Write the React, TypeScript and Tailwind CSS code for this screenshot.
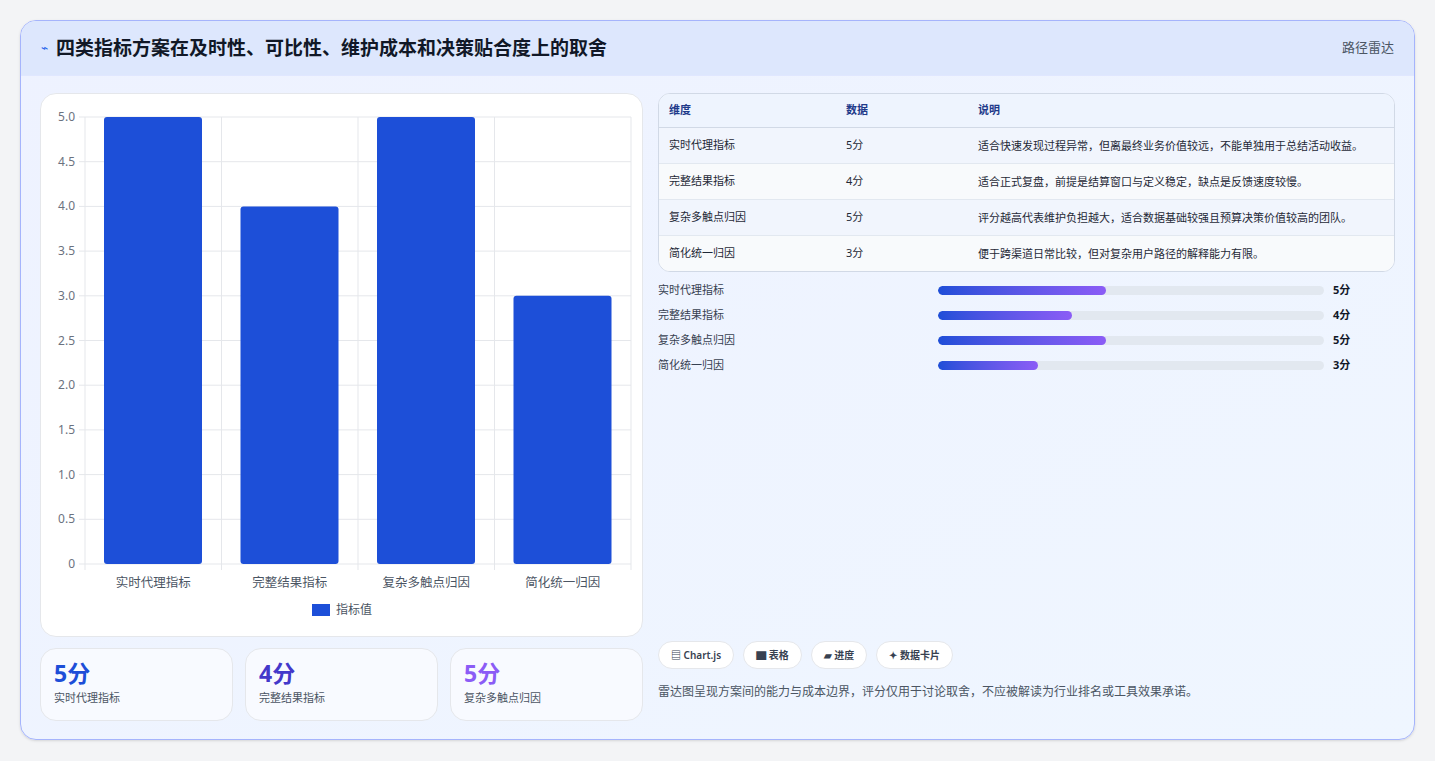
const rows = [
  { name: "实时代理指标", v: 5, pct: 43.5, note: "适合快速发现过程异常，但离最终业务价值较远，不能单独用于总结活动收益。" },
  { name: "完整结果指标", v: 4, pct: 34.7, note: "适合正式复盘，前提是结算窗口与定义稳定，缺点是反馈速度较慢。" },
  { name: "复杂多触点归因", v: 5, pct: 43.5, note: "评分越高代表维护负担越大，适合数据基础较强且预算决策价值较高的团队。" },
  { name: "简化统一归因", v: 3, pct: 26, note: "便于跨渠道日常比较，但对复杂用户路径的解释能力有限。" },
];

function BarChart() {
  // plot: x 44..590, y 22..469 inside a 600-wide svg
  const x0 = 44, x1 = 590, y0 = 22, y1 = 469;
  const h = y1 - y0;
  const colW = (x1 - x0) / 4;
  const ticks = [5, 4.5, 4, 3.5, 3, 2.5, 2, 1.5, 1, 0.5, 0];
  return (
    <svg width="600" height="530" className="block">
      {ticks.map((t) => {
        const y = y1 - (t / 5) * h;
        return (
          <g key={t}>
            <line x1={x0 - 6} x2={x1} y1={y} y2={y} stroke="#e5e7eb" />
            <text x={x0 - 10} y={y + 4} textAnchor="end" fontSize="12" fill="#6b7280">
              {t === 0 ? "0" : t.toFixed(1)}
            </text>
          </g>
        );
      })}
      {[0, 1, 2, 3, 4].map((i) => (
        <line key={i} x1={x0 + i * colW} x2={x0 + i * colW} y1={y0} y2={y1 + 6} stroke="#e5e7eb" />
      ))}
      {rows.map((r, i) => {
        const bh = (r.v / 5) * h;
        return (
          <g key={r.name}>
            <rect x={x0 + i * colW + 19} y={y1 - bh} width={98} height={bh} rx={3} fill="#1d4fd8" />
            <text x={x0 + i * colW + colW / 2} y={y1 + 23} textAnchor="middle" fontSize="12.5" fill="#4b5563">
              {r.name}
            </text>
          </g>
        );
      })}
      <rect x={271} y={509} width={18} height={12} fill="#1d4fd8" />
      <text x={295} y={519} fontSize="12" fill="#4b5563">指标值</text>
    </svg>
  );
}

export default function App() {
  const valColors = ["text-[#1d4ed8]", "text-[#4338ca]", "text-[#8b5cf6]"];
  return (
    <div className="w-[1435px] h-[761px] bg-[#f3f4f6] pt-5 px-5" style={{ fontFamily: '"Noto Sans", "Noto Sans CJK SC", sans-serif' }}>
      <div className="h-[720px] rounded-2xl border border-[#a5b4fc] bg-gradient-to-br from-[#eef2ff] to-[#eff6ff] overflow-hidden shadow-sm">
        <div className="h-[55px] flex items-center justify-between px-5 bg-[#dde7fd] border-b border-[#e0e7ff]">
          <div className="flex items-center gap-2">
            <span className="text-[#2563eb] text-xs">⌁</span>
            <h1 className="text-[19px] font-bold text-[#111827]">四类指标方案在及时性、可比性、维护成本和决策贴合度上的取舍</h1>
          </div>
          <span className="text-[13px] text-[#4b5563]">路径雷达</span>
        </div>
        <div className="flex gap-[15px] px-[19px] pt-[17px]">
          <div className="w-[603px] flex flex-col gap-[11px]">
            <div className="h-[544px] bg-white rounded-2xl border border-[#e5e7eb] pt-[1px]">
              <BarChart />
            </div>
            <div className="grid grid-cols-3 gap-3">
              {rows.slice(0, 3).map((r, i) => (
                <div key={r.name} className="h-[73px] rounded-2xl border border-[#e5e7eb] bg-[#f8faff] px-[13px] pt-[10px]">
                  <div className={`text-[23px] font-bold leading-7 ${valColors[i]}`}>{r.v}分</div>
                  <div className="text-[11px] text-[#4b5563] mt-[3px]">{r.name}</div>
                </div>
              ))}
            </div>
          </div>
          <div className="flex-1 flex flex-col">
            <div className="rounded-xl border border-[#d1d9e6] overflow-hidden bg-white">
              <table className="w-full text-[11px] text-[#1f2937]">
                <thead className="bg-[#eef4fe] text-[#1e3a8a]">
                  <tr className="border-b border-[#d1d9e6]">
                    <th className="text-left font-semibold px-[10px] h-[33px] w-[177px]">维度</th>
                    <th className="text-left font-semibold px-[10px] w-[132px]">数据</th>
                    <th className="text-left font-semibold px-[10px]">说明</th>
                  </tr>
                </thead>
                <tbody>
                  {rows.map((r, i) => (
                    <tr key={r.name} className={`${i % 2 ? "bg-[#f8fafc]" : "bg-[#f1f5fd]"} ${i < 3 ? "border-b border-[#e2e8f0]" : ""}`}>
                      <td className="px-[10px] py-[9px] align-top">{r.name}</td>
                      <td className="px-[10px] py-[9px] align-top">{r.v}分</td>
                      <td className="px-[10px] py-[9px] align-top leading-[17px]">{r.note}</td>
                    </tr>
                  ))}
                </tbody>
              </table>
            </div>
            <div className="flex flex-col gap-[9px] mt-[11px]">
              {rows.map((r) => (
                <div key={r.name} className="flex items-center h-4 text-[11px] text-[#374151]">
                  <span className="w-[280px]">{r.name}</span>
                  <div className="w-[386px] h-[9px] rounded-full bg-[#e2e8f0] overflow-hidden">
                    <div className="h-full rounded-full bg-gradient-to-r from-[#1d4ed8] to-[#8b5cf6]" style={{ width: `${r.pct}%` }} />
                  </div>
                  <span className="ml-[9px] font-bold text-[#111827]">{r.v}分</span>
                </div>
              ))}
            </div>
            <div className="mt-auto flex gap-[9px] mb-[14px]">
              {["▤ Chart.js", "▇ 表格", "▰ 进度", "✦ 数据卡片"].map((c) => (
                <span key={c} className="h-7 flex items-center px-3 rounded-full bg-white border border-[#e5e7eb] text-[10px] font-semibold text-[#374151]">{c}</span>
              ))}
            </div>
            <p className="text-[12px] text-[#4b5563] mb-[20px]">雷达图呈现方案间的能力与成本边界，评分仅用于讨论取舍，不应被解读为行业排名或工具效果承诺。</p>
          </div>
        </div>
      </div>
    </div>
  );
}
